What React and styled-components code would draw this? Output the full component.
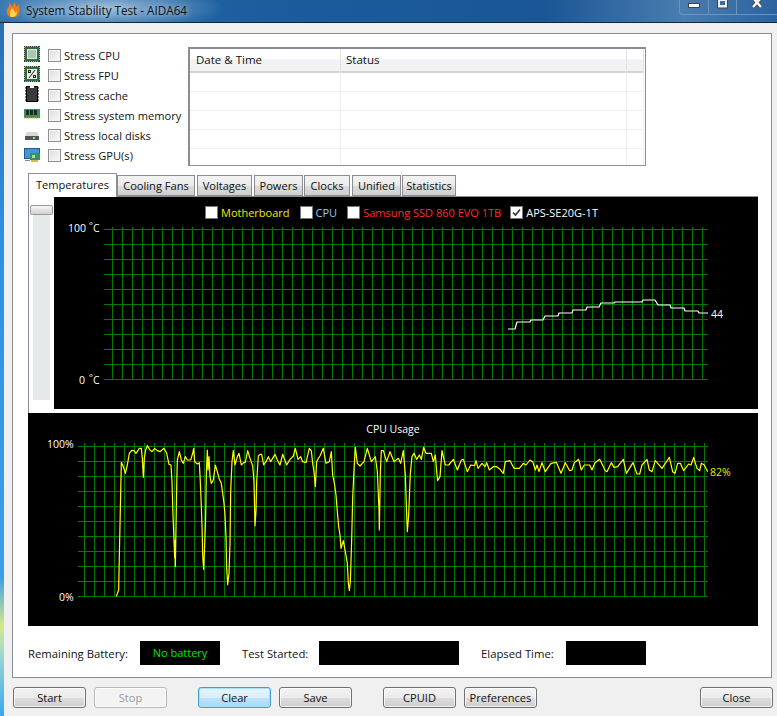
import React from 'react'
import styled, { createGlobalStyle } from 'styled-components'

const UI_FONT = '"Open Sans", Roboto, "Liberation Sans", sans-serif'

const GlobalStyle = createGlobalStyle`
  html, body { margin: 0; padding: 0; background: #f0f0f0; }
  body { font-family: ${UI_FONT}; font-size: 11.1px; color: #111; }
  * { box-sizing: border-box; }
`

const Window = styled.div`
  width: 777px;
  height: 716px;
  overflow: hidden;
  display: flex;
  flex-direction: column;
`
const TitleBar = styled.div`
  height: 23px;
  flex: none;
  display: flex;
  align-items: flex-start;
  padding-left: 6px;
  border-bottom: 1px solid #12263f;
  background:
    radial-gradient(ellipse 120px 24px at 105px 8px, rgba(170, 200, 225, 0.85), rgba(170, 200, 225, 0) 100%),
    linear-gradient(90deg, #2d72ad 0%, #1b5c9c 35%, #1a5695 70%, #4a7db0 88%, #2b639f 100%);
`
const TitleText = styled.span`
  margin-left: 6px;
  margin-top: 2px;
  font-size: 11.7px;
  line-height: 16px;
  color: #101010;
  text-shadow: 0 0 6px rgba(255, 255, 255, 0.7);
`
const Controls = styled.div`
  margin-left: auto;
  width: 98px;
  height: 15px;
  display: flex;
  border: 1px solid #6f93ba;
  border-top: none;
  border-right: none;
  border-bottom-left-radius: 4px;
`
const ControlButton = styled.div`
  flex: ${p => p.$wide ? '1' : 'none'};
  width: ${p => p.$wide ? 'auto' : '28px'};
  border-left: ${p => p.$first ? 'none' : '1px solid #6f93ba'};
  display: flex;
  justify-content: center;
  padding-top: ${p => p.$pad || 0}px;
`
const Body = styled.div`
  flex: 1;
  display: flex;
  min-height: 0;
`
const FrameEdge = styled.div`
  width: 4px;
  flex: none;
  background: linear-gradient(180deg, #2a6fb2 0%, #2f8fe0 30%, #3aa0e8 80%, #d7e88a 87%, #9fd8d0 91%, #38a7ee 100%);
`
const Client = styled.div`
  flex: 1;
  background: #f0f0f0;
  padding: 10px 5px 0 8px;
  display: flex;
  flex-direction: column;
`
const Panel = styled.div`
  height: 645px;
  flex: none;
  background: #fff;
  border: 1px solid #8a8a92;
  display: flex;
  flex-direction: column;
`
const TopRow = styled.div`
  display: flex;
  height: 139px;
  flex: none;
`
const StressList = styled.div`
  width: 175px;
  flex: none;
  padding: 11px 0 0 11px;
  display: flex;
  flex-direction: column;
`
const StressRow = styled.label`
  height: 20px;
  display: flex;
  align-items: center;
  white-space: nowrap;
`
const StressIcon = styled.span`
  width: 16px;
  height: 16px;
  flex: none;
  display: flex;
  margin-right: 8px;
  margin-bottom: 2px;
`
const CheckBox = styled.span`
  width: 13px;
  height: 13px;
  flex: none;
  margin-right: 3px;
  border: 1px solid #8e8f8f;
  background: linear-gradient(135deg, #dcdcdc, #fafafa);
  box-shadow: inset 0 0 0 1px #f4f4f4;
`
const LogTable = styled.div`
  margin: 13px 0 0 0;
  width: 458px;
  height: 119px;
  border: 2px solid #8a8d94;
  border-right-width: 1px;
  border-bottom-width: 1px;
  display: flex;
  flex-direction: column;
  padding-right: 1px;
`
const LogHeader = styled.div`
  display: grid;
  grid-template-columns: 151px 286px 1fr;
  height: 24px;
  flex: none;
  background: linear-gradient(180deg, #ffffff 0%, #ffffff 40%, #f1f2f4 45%, #f1f2f4 92%, #d5d5d5 92%);
`
const LogHeadCell = styled.div`
  padding: 3px 0 0 ${p => p.$pad || 6}px;
  line-height: 16px;
  font-size: 11.5px;
  border-right: 1px solid #e2e3e5;
`
const LogRow = styled.div`
  display: grid;
  grid-template-columns: 151px 286px 1fr;
  height: ${p => p.$last ? 'auto' : '19px'};
  flex: ${p => p.$last ? '1' : 'none'};
  border-bottom: ${p => p.$last ? 'none' : '1px solid #eeeeee'};
`
const LogCell = styled.div`
  border-right: 1px solid #eeeeee;
`
const TabStrip = styled.div`
  margin-left: 15px;
  height: 23px;
  flex: none;
  display: flex;
  align-items: flex-end;
  position: relative;
  z-index: 1;
`
const Tab = styled.div`
  width: ${p => p.$width}px;
  height: ${p => p.$active ? 24 : 21}px;
  margin-left: ${p => p.$gap || 0}px;
  margin-bottom: ${p => p.$active ? -1 : 0}px;
  padding-bottom: ${p => p.$active ? 3 : 1}px;
  display: flex;
  justify-content: center;
  align-items: center;
  border: 1px solid #8a8d94;
  border-bottom: ${p => p.$active ? 'none' : '1px solid #8a8d94'};
  background: ${p => p.$active ? '#fff' : 'linear-gradient(180deg, #f3f3f3 0%, #ebebeb 50%, #dcdcdc 51%, #d0d0d0 100%)'};
  white-space: nowrap;
`
const TabPane = styled.div`
  margin-left: 15px;
  width: 730px;
  flex: none;
  border-top: 1px solid #8a8d94;
`
const TempRow = styled.div`
  display: flex;
  height: 216px;
  border-left: 1px solid #8a8d94;
`
const SliderColumn = styled.div`
  width: 25px;
  flex: none;
  padding-top: 8px;
  display: flex;
  flex-direction: column;
  align-items: center;
`
const SliderThumb = styled.div`
  width: 23px;
  height: 10px;
  flex: none;
  border: 1px solid #9a9a9a;
  border-radius: 2px;
  background: linear-gradient(180deg, #f6f6f6, #d2d2d2);
`
const SliderTrack = styled.div`
  width: 17px;
  height: 185px;
  flex: none;
  background: #e6e9e9;
`
const Scope = styled.div`
  background: #000;
  flex: ${p => p.$fill ? '1' : 'none'};
  height: ${p => p.$height}px;
  display: flex;
  flex-direction: column;
`
const Legend = styled.div`
  height: 20px;
  flex: none;
  display: flex;
  align-items: center;
  padding-left: 151px;
  padding-top: 10px;
  font-size: 11px;
  color: #fff;
`
const LegendBox = styled.span`
  width: 13px;
  height: 13px;
  flex: none;
  display: flex;
  background: #fff;
  border: 1px solid #777;
  margin-right: 3px;
`
const LegendLabel = styled.span`
  color: ${p => p.$color};
  margin-right: ${p => p.$gap}px;
  white-space: nowrap;
`
const ScopeTitle = styled.div`
  height: 25px;
  flex: none;
  padding-top: 8px;
  line-height: 16px;
  text-align: center;
  color: #fff;
  font-size: 10.5px;
`
const PlotSvg = styled.svg`
  display: block;
  flex: none;
`
const AxisText = styled.text`
  font-family: ${UI_FONT};
  font-size: ${p => p.$size || 10.5}px;
  fill: ${p => p.$color || '#fff'};
`
const StatusRow = styled.div`
  display: flex;
  align-items: center;
  margin: 15px 0 0 15px;
  height: 24px;
`
const StatusLabel = styled.span`
  width: ${p => p.$width}px;
  flex: none;
  font-size: 11.3px;
  white-space: nowrap;
`
const StatusBox = styled.div`
  width: ${p => p.$width}px;
  height: 24px;
  flex: none;
  margin-right: ${p => p.$gap || 0}px;
  background: #000;
  color: #00e600;
  display: flex;
  align-items: center;
  justify-content: center;
  padding-bottom: 2px;
  font-size: 11px;
`
const ButtonBar = styled.div`
  display: flex;
  margin-top: 9px;
  margin-left: 1px;
  margin-right: -1px;
  height: 22px;
`
const ButtonGroup = styled.div`
  display: flex;
  gap: 8px;
  margin-right: 31px;
`
const Btn = styled.button`
  width: 73px;
  height: 21px;
  padding: 0;
  font-family: ${UI_FONT};
  font-size: 11.1px;
  line-height: 18px;
  border-radius: 3px;
  color: ${p => p.$disabled ? '#9a9a9a' : '#111'};
  border: 1px solid ${p => p.$disabled ? '#b8b8b8' : p.$focus ? '#3c9fd5' : '#707070'};
  box-shadow: inset 0 0 0 1px ${p => p.$focus ? '#a6e0fb' : 'rgba(255,255,255,0.75)'};
  background: ${p => p.$disabled
    ? '#f3f3f3'
    : p.$focus
      ? 'linear-gradient(180deg, #e6f4fc 0%, #d9effb 50%, #bde4fa 51%, #a7d9f5 100%)'
      : 'linear-gradient(180deg, #f2f2f2 0%, #ebebeb 50%, #dddddd 51%, #cfcfcf 100%)'};
  ${p => p.$end && 'margin-left: auto;'}
`
const FlameSvg = styled.svg`
  margin-top: 1px;
  flex: none;
`

// window buttons
const MinIcon = () => (
  <svg width="12" height="6">
    <rect x="0.5" y="0.5" width="11" height="4" fill="#fff" stroke="#444" />
  </svg>
)
const MaxIcon = () => (
  <svg width="12" height="9">
    <rect x="0.5" y="-2" width="10" height="10" fill="#eee" stroke="#444" />
    <rect x="3" y="1" width="5" height="4" fill="#3d6a9f" />
  </svg>
)
const CloseIcon = () => (
  <svg width="12" height="9">
    <path d="M2 -2 L10 7 M10 -2 L2 7" stroke="#444" strokeWidth="4" />
    <path d="M2 -2 L10 7 M10 -2 L2 7" stroke="#fff" strokeWidth="2.4" />
  </svg>
)
const Flame = () => (
  <FlameSvg width="14" height="17" viewBox="0 0 14 17">
    <path d="M3 0 C4 3 6 4 6 6 C7 4 8 3 8 1 C10 3 10 5 11 6 C12 5 12 4 13 3 C14 8 14 13 10 16 L4 16 C0 14 0 9 2 7 C3 5 4 3 3 0 Z" fill="#ee7b1c" />
    <path d="M6 7 C7 9 9 9 9 12 C10 11 10 11 11 10 C11 13 10 15 8 16 L5 16 C3 14 4 10 6 7 Z" fill="#fbd24e" />
  </FlameSvg>
)

// stress row icons
const ChipIcon = () => (
  <svg width="16" height="16" viewBox="0 0 16 16">
    <rect x="0.5" y="0.5" width="15" height="15" fill="#2f6a40" stroke="#2a3b2c" />
    <rect x="3.5" y="3.5" width="9" height="9" fill="#a9c6ae" stroke="#dfe8df" />
    <path d="M1 0.5 H15 M1 15.5 H15 M0.5 1 V15 M15.5 1 V15" stroke="#d9b84a" strokeDasharray="1 1" />
  </svg>
)
const FpuIcon = () => (
  <svg width="16" height="16" viewBox="0 0 16 16">
    <rect x="0.5" y="0.5" width="15" height="15" fill="#2f6a40" stroke="#2a3b2c" />
    <rect x="3" y="3" width="10" height="10" fill="#e6ece6" />
    <path d="M1 0.5 H15 M1 15.5 H15 M0.5 1 V15 M15.5 1 V15" stroke="#d9b84a" strokeDasharray="1 1" />
    <path d="M11 4 L5 12" stroke="#222" />
    <rect x="4.5" y="4.5" width="2" height="2" fill="none" stroke="#222" />
    <rect x="9.5" y="9.5" width="2" height="2" fill="none" stroke="#222" />
  </svg>
)
const CacheIcon = () => (
  <svg width="16" height="16" viewBox="0 0 16 16">
    <rect x="2.5" y="0.5" width="11" height="15" fill="#3a3a3a" stroke="#000" />
    <path d="M6 0 H10 V2 H6 Z" fill="#fff" />
    <path d="M1 2 H15 M1 5 H15 M1 8 H15 M1 11 H15 M1 14 H15" stroke="#000" strokeWidth="1" strokeDasharray="2 10" />
  </svg>
)
const MemoryIcon = () => (
  <svg width="16" height="16" viewBox="0 0 16 16">
    <rect x="0" y="3" width="16" height="9" fill="#3f8f5c" />
    <path d="M2 4 H5 V9 H2 Z M6 4 H9 V9 H6 Z M10 4 H13 V9 H10 Z" fill="#1d2a20" />
    <path d="M0 12 H16" stroke="#c9b35a" strokeDasharray="1 1" />
  </svg>
)
const DiskIcon = () => (
  <svg width="16" height="16" viewBox="0 0 16 16">
    <path d="M3 6 H13 L15 10 H1 Z" fill="#d8d8d8" />
    <rect x="1" y="10" width="14" height="4" fill="#555" />
    <rect x="9" y="11" width="2" height="2" fill="#5bff5b" />
  </svg>
)
const GpuIcon = () => (
  <svg width="16" height="16" viewBox="0 0 16 16">
    <rect x="0.5" y="2.5" width="15" height="10" fill="#3f97d9" stroke="#235a8a" />
    <rect x="1" y="14" width="5" height="1" fill="#7a8ea0" />
    <rect x="6" y="7" width="10" height="7" fill="#3f8f5c" />
    <rect x="8" y="9" width="3" height="3" fill="#a9d6b4" />
    <rect x="7" y="14" width="7" height="2" fill="#d9b84a" />
  </svg>
)

const stressItems = [
  ['Stress CPU', ChipIcon],
  ['Stress FPU', FpuIcon],
  ['Stress cache', CacheIcon],
  ['Stress system memory', MemoryIcon],
  ['Stress local disks', DiskIcon],
  ['Stress GPU(s)', GpuIcon],
]

const tabs = [
  ['Temperatures', 89, 0],
  ['Cooling Fans', 78, 0],
  ['Voltages', 55, 2],
  ['Powers', 49, 2],
  ['Clocks', 46, 1],
  ['Unified', 49, 2],
  ['Statistics', 54, 1],
]

// temperature trace, page pixels
const tempLine = [
  [508, 329], [515, 329], [517, 322], [530, 322], [531, 320], [543, 320], [545, 316], [558, 316],
  [559, 313], [572, 313], [573, 310], [586, 310], [587, 307], [599, 307], [601, 303], [614, 303],
  [615, 302], [642, 302], [643, 300], [655, 300], [658, 305], [670, 305], [671, 308], [684, 308],
  [685, 311], [698, 311], [699, 313], [708, 313],
]

// cpu trace, read off 3x crops so each part keeps its crop origin
const cpuA = [
  [289,529],[296,510],[298,408],[302,222],[304,127],[310,140],[316,160],[322,135],[328,100],[335,91],[342,92],
  [348,100],[358,85],[364,85],[367,115],[370,172],[373,115],[377,90],[382,77],[390,90],[396,95],[404,85],
  [412,92],[420,95],[432,85],[440,100],[447,133],[453,135],[456,186],[459,287],[462,362],[464,413],[466,360],
  [466,440],[470,205],[472,120],[478,95],[484,120],[490,130],[496,110],[502,120],[512,120],[518,100],[521,85],
  [524,125],[532,132],[538,128],[540,165],[543,235],[546,315],[548,405],[551,448],[554,375],[557,290],[559,160],
  [562,90],[564,150],[567,110],[570,170],[574,190],[580,180],[586,135],[592,155],[598,178],[604,190],[608,220],
  [612,250],[615,285],[618,350],[620,445],[623,494],[627,460],[630,372],[632,215],[636,125],[640,92],[645,135],
  [652,110],[657,100],[664,135],[672,127],[676,127],[683,92],[690,115],[698,137],[702,185],[705,318],[708,272],
  [710,185],[715,108],[720,103],[725,103],[731,135],[738,125],[745,110],[752,125],[765,103],[772,120],[780,135],
]
const cpuB = [
  [38,103],[50,135],[60,118],[70,108],[76,85],[84,118],[92,110],[98,125],[108,128],[118,85],[124,92],[128,130],
  [132,155],[136,200],[140,125],[145,115],[150,108],[160,85],[168,130],[178,125],[184,95],[188,165],[194,195],
  [198,225],[202,275],[206,320],[210,345],[213,385],[220,362],[226,395],[232,430],[235,490],[238,512],[241,485],
  [245,360],[248,235],[252,150],[256,82],[262,130],[270,138],[282,125],[292,85],[304,125],[316,110],[322,155],
  [327,270],[328,330],[331,155],[334,92],[340,92],[350,125],[360,95],[372,125],[385,115],[392,130],[400,92],
  [406,165],[410,285],[412,335],[416,285],[421,160],[426,110],[432,100],[440,118],[448,105],[454,118],[461,82],
  [468,100],[484,100],[490,125],[496,105],[500,155],[503,182],[510,170],[516,92],[526,135],[536,135],[550,118],
  [562,150],[574,120],[580,118],[592,155],[602,135],[614,137],[618,122],[624,145],[636,130],[645,140],[650,128],
  [658,150],[670,140],[680,140],[690,148],[700,160],[706,125],[720,122],[732,145],[748,145],[760,130],[768,135],[780,120],
]
const cpuC = [
  [47,125],[55,150],[60,135],[66,155],[75,128],[85,155],[102,130],[118,127],[132,160],[145,128],[158,152],[165,150],
  [172,128],[185,118],[193,150],[202,135],[218,135],[225,150],[234,128],[248,118],[265,152],[270,155],[283,128],
  [291,142],[302,140],[319,118],[328,160],[348,128],[360,162],[368,162],[375,135],[390,118],[397,150],[405,155],
  [415,122],[435,145],[457,112],[467,155],[474,160],[482,130],[490,130],[500,152],[515,132],[522,135],[530,112],
  [540,145],[548,152],[553,130],[562,135],[572,155],
]
const fromCrop = (pts, ox, oy) => pts.map(([x, y]) => [ox + x / 3, oy + y / 3])
const cpuLine = [...fromCrop(cpuA, 20, 420), ...fromCrop(cpuB, 270, 420), ...fromCrop(cpuC, 517, 420)]

const range = (from, to, step) => {
  const out = []
  for (let v = from; v <= to; v += step) out.push(v)
  return out
}

const Grid = ({ left, right, firstV, lastV, top, bottom, gridTop }) => (
  <g stroke="#007a00" strokeWidth="1" shapeRendering="crispEdges">
    {range(top, bottom, 15).map(y => (
      <line key={'h' + y} x1={left} x2={right} y1={y + 0.5} y2={y + 0.5} />
    ))}
    {range(firstV, lastV, 10).map(x => (
      <line key={'v' + x} x1={x + 0.5} x2={x + 0.5} y1={gridTop} y2={bottom + 1} />
    ))}
  </g>
)

const Trace = ({ points, color }) => (
  <polyline
    points={points.map(p => p.join(',')).join(' ')}
    fill="none"
    stroke={color}
    strokeWidth="1.2"
    strokeLinejoin="round"
  />
)

const Check = () => (
  <svg width="11" height="11" viewBox="0 0 11 11">
    <path d="M2 5.5 L4.5 8 L9 2.5" fill="none" stroke="#333" strokeWidth="1.6" />
  </svg>
)

export default function App() {
  return (
    <Window>
      <GlobalStyle />
      <TitleBar>
        <Flame />
        <TitleText>System Stability Test - AIDA64</TitleText>
        <Controls>
          <ControlButton $first $pad={3}><MinIcon /></ControlButton>
          <ControlButton><MaxIcon /></ControlButton>
          <ControlButton $wide><CloseIcon /></ControlButton>
        </Controls>
      </TitleBar>
      <Body>
        <FrameEdge />
        <Client>
          <Panel>
            <TopRow>
              <StressList>
                {stressItems.map(([label, Icon]) => (
                  <StressRow key={label}>
                    <StressIcon><Icon /></StressIcon>
                    <CheckBox />
                    {label}
                  </StressRow>
                ))}
              </StressList>
              <LogTable>
                <LogHeader>
                  <LogHeadCell>Date &amp; Time</LogHeadCell>
                  <LogHeadCell $pad={5}>Status</LogHeadCell>
                  <LogHeadCell />
                </LogHeader>
                {[0, 1, 2, 3].map(i => (
                  <LogRow key={i}><LogCell /><LogCell /><LogCell /></LogRow>
                ))}
                <LogRow $last><LogCell /><LogCell /><LogCell /></LogRow>
              </LogTable>
            </TopRow>
            <TabStrip>
              {tabs.map(([label, width, gap], i) => (
                <Tab key={label} $width={width} $gap={gap} $active={i === 0}>{label}</Tab>
              ))}
            </TabStrip>
            <TabPane>
              <TempRow>
                <SliderColumn>
                  <SliderThumb />
                  <SliderTrack />
                </SliderColumn>
                <Scope $fill $height={212}>
                  <Legend>
                    <LegendBox />
                    <LegendLabel $color="#e8f000" $gap={10}>Motherboard</LegendLabel>
                    <LegendBox />
                    <LegendLabel $color="#8fc8ff" $gap={10}>CPU</LegendLabel>
                    <LegendBox />
                    <LegendLabel $color="#ff2a2a" $gap={9}>Samsung SSD 860 EVO 1TB</LegendLabel>
                    <LegendBox><Check /></LegendBox>
                    <LegendLabel $color="#fff" $gap={0}>APS-SE20G-1T</LegendLabel>
                  </Legend>
                  <PlotSvg width="704" height="192" viewBox="54 217 704 192">
                    <Grid left={104} right={708} firstV={112} lastV={702} top={229} bottom={379} gridTop={227} />
                    <Trace points={tempLine} color="#fff" />
                    <AxisText x="68" y="232">100</AxisText>
                    <AxisText x="89" y="229" $size={9}>°</AxisText>
                    <AxisText x="93" y="232">C</AxisText>
                    <AxisText x="79" y="384">0</AxisText>
                    <AxisText x="89" y="381" $size={9}>°</AxisText>
                    <AxisText x="93" y="384">C</AxisText>
                    <AxisText x="711" y="318">44</AxisText>
                  </PlotSvg>
                </Scope>
              </TempRow>
              <Scope $height={213}>
                <ScopeTitle>CPU Usage</ScopeTitle>
                <PlotSvg width="730" height="188" viewBox="28 438 730 188">
                  <Grid left={78} right={708} firstV={84} lastV={704} top={446} bottom={596} gridTop={443} />
                  <Trace points={cpuLine} color="#ffff00" />
                  <AxisText x="47" y="448">100%</AxisText>
                  <AxisText x="59" y="601">0%</AxisText>
                  <AxisText x="710" y="476" $color="#e8e800">82%</AxisText>
                </PlotSvg>
              </Scope>
            </TabPane>
            <StatusRow>
              <StatusLabel $width={112}>Remaining Battery:</StatusLabel>
              <StatusBox $width={80} $gap={22}>No battery</StatusBox>
              <StatusLabel $width={77}>Test Started:</StatusLabel>
              <StatusBox $width={140} $gap={22} />
              <StatusLabel $width={85}>Elapsed Time:</StatusLabel>
              <StatusBox $width={80} />
            </StatusRow>
          </Panel>
          <ButtonBar>
            <ButtonGroup>
              <Btn>Start</Btn>
              <Btn $disabled>Stop</Btn>
            </ButtonGroup>
            <ButtonGroup>
              <Btn $focus>Clear</Btn>
              <Btn>Save</Btn>
            </ButtonGroup>
            <ButtonGroup>
              <Btn>CPUID</Btn>
              <Btn>Preferences</Btn>
            </ButtonGroup>
            <Btn $end>Close</Btn>
          </ButtonBar>
        </Client>
      </Body>
    </Window>
  )
}
